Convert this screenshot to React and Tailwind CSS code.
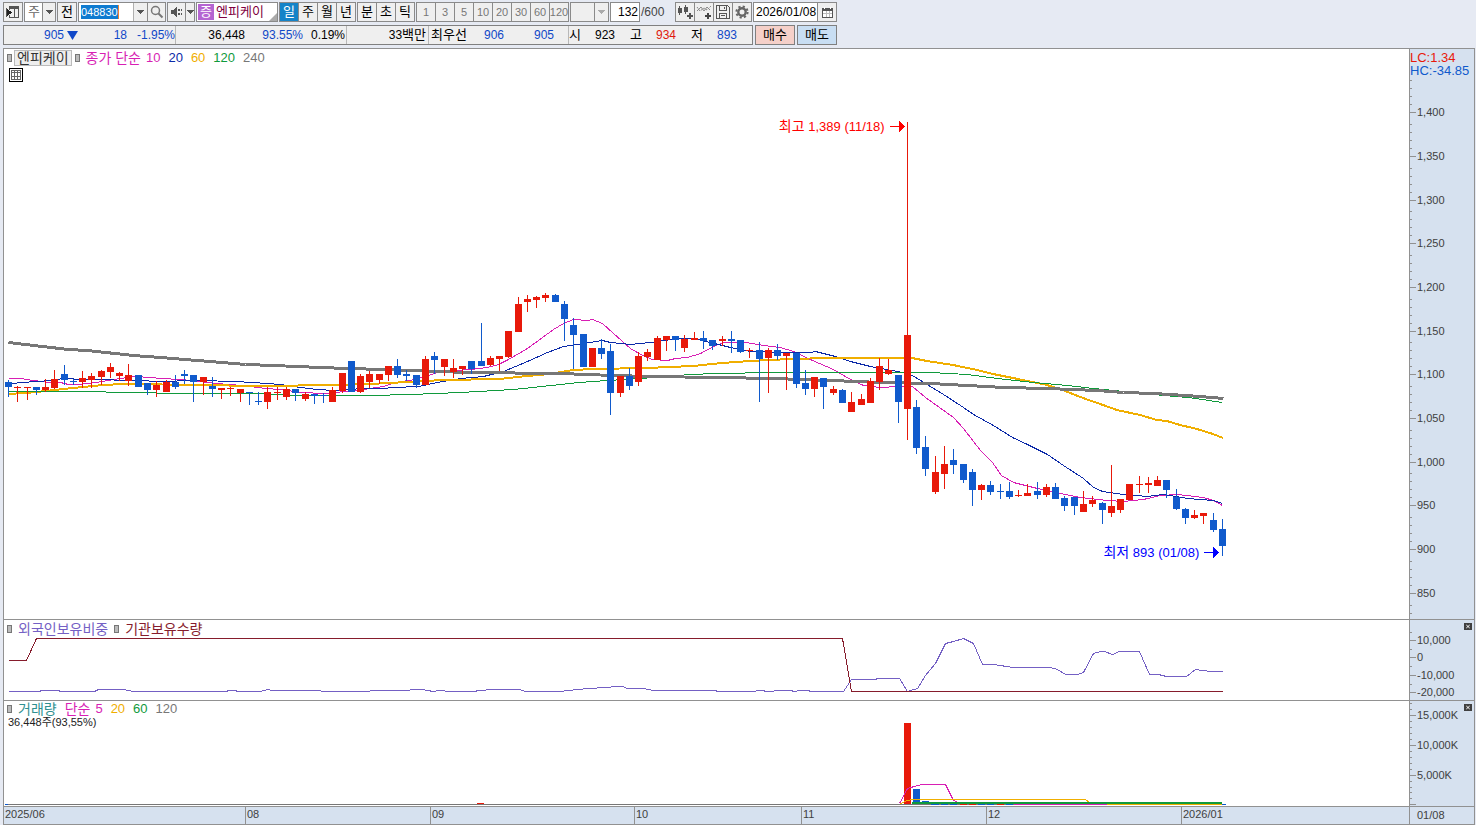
import React from "react";

const RED = "#e8190a";
const BLUE = "#105acc";

// One entry per trading day: colour, high, body top, body bottom, low.
const CANDLES = `B380,382,387,397 R386,387,388,402 R387,387,388,400 B387,387,390,395 R379,387,390,392 R370,379,388,389
B365,374,380,385 B379,381,382,385 R371,378,382,388 R373,376,380,388 R370,371,377,385 R363,367,372,378
R372,373,376,381 R364,375,381,386 B375,375,387,387 B383,383,390,395 R381,385,390,397 R380,382,392,392
B375,382,387,389 B370,374,376,384 B375,375,382,402 R377,377,382,395 B377,386,389,397 R388,388,390,399
R387,388,389,396 R389,389,393,402 B392,392,393,405 B392,401,402,405 R387,392,402,409 R387,392,393,400
R387,389,397,400 B389,389,393,401 R392,394,399,401 B394,394,396,404 B393,395,396,403 R387,390,402,402
R373,373,391,393 B361,361,392,392 R374,376,392,393 R371,374,382,388 R374,374,380,384 R366,366,375,381
B359,366,375,378 B370,374,376,381 B375,375,385,388 R356,359,385,385 B352,356,360,374 R359,359,367,376
R359,368,372,378 R366,366,369,375 B361,361,369,374 B323,361,366,366 R356,358,365,366 R356,356,359,371
R331,331,357,358 R297,304,332,332 R295,299,302,312 R296,297,300,308 R293,295,298,302 B294,295,302,302
B301,304,319,341 B318,325,335,369 B334,334,367,367 R348,348,367,367 B339,348,354,359 B344,351,393,415
R376,376,393,397 B368,376,386,390 R352,356,382,386 R349,352,357,361 R336,338,360,360 R336,336,340,351
B336,336,340,351 R335,339,348,352 R332,338,340,340 B331,338,341,349 B340,340,346,350 R336,339,341,346
B331,339,341,353 B340,340,352,353 R348,350,351,358 B342,350,359,402 R348,350,358,393 B344,350,356,360
R353,353,356,390 B353,353,384,388 B370,383,389,395 R377,377,389,397 B378,378,387,409 R386,389,393,395
B389,390,403,403 R392,402,412,412 R394,399,405,405 R378,381,403,403 R358,366,382,390 R359,370,374,375
B375,375,402,423 R122,335,409,440 B400,407,448,454 B436,447,469,476 R456,472,492,494 R446,464,474,489
B449,460,465,474 B464,464,480,483 B469,472,490,506 R484,485,490,500 B481,485,492,495 B484,491,492,499
B482,491,497,499 R490,495,496,497 R484,493,496,496 B482,491,495,499 R484,487,495,497 B483,487,499,499
B496,498,506,511 B497,497,506,515 R491,504,512,512 R496,500,504,507 B502,503,510,524 R465,506,513,517
R499,499,510,513 R484,484,500,500 R476,484,485,493 R477,483,485,493 R476,480,486,486 B480,480,490,498
B489,497,509,510 B508,509,518,524 R510,515,518,519 R513,513,516,524 B513,520,530,532 B519,529,546,556`
  .split(/\s+/)
  .map((s) => [s[0], ...s.slice(1).split(",").map(Number)]);

const candleX = (i) => 8 + Math.round(i * 9.267);

const MA10 =
  "8,378 20,378 33,380 50,382 60,382 68,384 78,384 95,382 108,380 120,378 135,376 150,377 160,378 180,379 200,381 215,383 230,384 250,386 265,388 280,389 300,392 325,393 345,391 363,389 383,386 395,382 415,379 437,372 455,370 470,369 487,367 498,364 508,359 527,348 553,329 563,323 573,319 587,320 592,319 602,323 613,333 630,348 642,355 652,359 667,360 675,358 687,357 700,353 713,346 723,342 745,342 763,345 780,347 793,351 812,360 833,369 850,379 863,385 880,387 897,386 912,386 925,397 953,417 963,428 980,450 992,462 1001,475 1013,482 1037,488 1060,493 1080,497 1107,500 1123,501 1143,499 1160,495 1177,494 1203,497 1213,500 1222,505";
const MA20 =
  "8,384 20,382 37,381 50,380 63,378 83,379 143,380 153,381 200,380 233,381 253,382 280,384 300,387 317,389 333,390 363,388 383,388 393,387 418,386 437,382 460,378 483,376 503,371 527,361 547,352 563,346 583,343 602,340 610,342 630,344 650,342 663,340 683,338 697,339 710,342 730,347 750,351 790,352 810,352 815,351 835,356 850,361 870,366 897,371 907,373 912,375 925,383 943,394 963,407 973,414 993,425 1012,437 1027,444 1047,454 1063,465 1083,478 1093,487 1102,491 1123,494 1147,496 1163,494 1187,498 1213,500 1222,503";
const MA60 =
  "8,394 25,393 37,392 63,389 83,387 103,385 123,384 200,385 257,386 340,385 370,384 407,382 443,380 500,379 527,376 550,374 573,370 593,369 647,368 670,367 693,366 722,363 750,361 790,359 830,358 880,358 912,358 927,361 953,365 977,370 993,374 1013,378 1047,385 1060,389 1083,398 1103,405 1117,410 1140,415 1157,420 1167,421 1180,425 1197,429 1213,434 1223,438";
const MA120 =
  "8,391 60,391 150,392 160,393 260,393 270,394 300,395 370,395 410,394 460,392 513,389 532,387 560,384 578,382 607,380 640,378 667,376 689,374 717,373 773,372 930,372 967,374 997,378 1033,382 1067,385 1093,388 1163,395 1188,397 1222,402";
const MA240 =
  "8,342 42,346 68,349 87,350 133,355 160,357 197,360 245,364 273,365 320,367 347,368 383,369 410,370 467,372 560,373 613,375 650,376 717,377 773,378 830,380 857,381 880,382 930,383 967,385 1003,387 1047,388 1097,390 1123,392 1153,393 1170,394 1200,396 1223,398";
const FOREIGN =
  "8,691 39,691 41,690 58,690 60,691 94,691 98,689 123,689 128,690 133,691 226,691 228,690 235,690 237,691 260,691 267,689 272,690 300,690 340,691 400,690 420,689 428,690 432,691 440,690 449,691 475,691 477,690 495,689 519,689 525,691 560,691 568,690 587,688 607,687 615,686 622,686 627,688 643,688 653,690 715,690 717,691 754,691 757,690 763,690 765,691 782,690 791,690 793,691 801,690 808,690 810,691 843,691 851,679 875,679 877,678 899,678 907,691 910,690 917,688 925,675 935,663 945,643 953,641 963,638 973,643 982,664 993,664 1013,667 1050,667 1057,669 1065,674 1077,674 1083,672 1093,653 1100,651 1104,651 1112,654 1119,651 1139,651 1149,674 1158,674 1166,676 1186,676 1195,669 1210,671 1222,671";
const INSTITUTION = "8,660 26,660 36,638 842,638 851,691 1222,691";

const PRICE_TICKS = [
  ["1,400", 112], ["1,350", 156], ["1,300", 200], ["1,250", 243], ["1,200", 287], ["1,150", 331],
  ["1,100", 374], ["1,050", 418], ["1,000", 462], ["950", 505], ["900", 549], ["850", 593],
];
const PRICE_MINOR = [...PRICE_TICKS.flatMap(([, y]) => [y - 8, y - 16, y - 24, y - 32]), 605, 613];
const HOLD_TICKS = [["10,000", 640], ["0", 657], ["-10,000", 675], ["-20,000", 692]];
const HOLD_MINOR = [632, 649, 666, 684];
const VOL_TICKS = [["15,000K", 715], ["10,000K", 745], ["5,000K", 775], ["", 804]];
const VOL_MINOR = [703, 709, 721, 727, 733, 739, 751, 757, 763, 769, 781, 787, 792, 798];

const VOL_BARS = [
  [904, 723, 7, 81, RED], [913, 789, 7, 15, BLUE], [922, 801, 7, 3, BLUE], [477, 803, 7, 1, RED],
  [931, 804, 8, 1, BLUE], [941, 804, 7, 1, BLUE], [950, 804, 7, 1, BLUE], [960, 804, 7, 1, RED],
  [969, 804, 7, 1, RED], [978, 804, 7, 1, BLUE], [987, 804, 7, 1, BLUE], [997, 804, 7, 1, RED],
  [1006, 804, 7, 1, BLUE], [1014, 804, 93, 1, "#d81fb4"], [1107, 804, 115, 1, "#f0ae00"],
  [1222, 804, 4, 1, BLUE], [5, 804, 3, 1, BLUE],
];

function Line({ points, color, width = 1 }) {
  return (
    <polyline
      points={points}
      fill="none"
      stroke={color}
      strokeWidth={width}
      transform={width === 2 ? undefined : "translate(.5 .5)"}
      shapeRendering="crispEdges"
    />
  );
}

function Axis({ top, height, ticks, minor, className, children }) {
  return (
    <div className="relative w-[65px] shrink-0 border-l border-[#919191] bg-[#d6e1ef]">
      <svg viewBox={`1410 ${top} 64 ${height}`} className={"block w-full " + className}>
        {minor.map((y) => (
          <rect key={y} x="1410" y={y} width="2" height="1" fill="#919191" />
        ))}
        {ticks.map(([label, y]) => (
          <g key={y}>
            <rect x="1410" y={y} width="6" height="1" fill="#919191" />
            <text x="1417" y={y + 4} fontSize="11" fill="#404040">{label}</text>
          </g>
        ))}
      </svg>
      {children}
    </div>
  );
}

function ClosePane({ label }) {
  return (
    <button aria-label={label} className="absolute right-[2px] top-[3px] h-[7px] w-2 bg-[#404040]">
      <svg viewBox="0 0 8 7" className="block h-full w-full" stroke="#fff" strokeWidth="1">
        <path d="M2.3 2l3.4 3M5.7 2l-3.4 3" />
      </svg>
    </button>
  );
}

const Marker = () => <span className="h-2 w-[5px] shrink-0 border border-[#777] bg-[#bbb]" />;
const Down = ({ light }) => (
  <svg viewBox="0 0 7 4" className="h-1 w-[7px]" shapeRendering="crispEdges">
    <path d="M0 0h7L3.5 4z" fill={light ? "#aaa" : "#555"} />
  </svg>
);

const group = "flex h-5 border border-[#8a8a8a] bg-[#efefef]";
const tool = "flex w-[19px] items-center justify-center border-r border-[#8a8a8a] last:w-[18px] last:border-r-0";

function Toolbar() {
  return (
    <div className="flex gap-px">
      <button aria-label="패널 열기" className={group + " w-5 items-center justify-center"}>
        <svg viewBox="0 0 16 16" className="h-4 w-4" shapeRendering="crispEdges">
          <path d="M4 2h10v12H4v-3h1v2h4V5H5v1H4zM10 5v8h3V5z" fill="#555" fillRule="evenodd" />
          <path d="M2 5l5 3.500L2 12z" fill="#222" />
          <path d="M1 4h1v9H1z" fill="#555" />
        </svg>
      </button>
      <div className={group + " relative w-8 bg-white"}>
        <select aria-label="종목 구분" className="w-full appearance-none bg-transparent pl-[3px] text-[13px] leading-[18px] text-[#666]">
          <option>주</option>
        </select>
        <span className="pointer-events-none absolute inset-y-0 right-0 flex w-[13px] items-center justify-center border-l border-[#8a8a8a] bg-[#efefef]"><Down /></span>
      </div>
      <button className={group + " w-5 items-center justify-center"}>전</button>
      <div className={group + " w-[88px]"}>
        <div className="flex flex-1 items-center bg-white pl-0.5">
          <input aria-label="종목코드" defaultValue="048830" className="h-[14px] w-[37px] bg-[#0f7bd0] text-[11px] text-white outline-none" />
          <span className="h-[14px] w-px bg-[#f08030]" />
        </div>
        <button aria-label="종목 목록" className="flex w-[14px] items-center justify-center border-l border-[#b0b0b0]"><Down /></button>
        <button aria-label="종목 검색" className="flex w-[18px] items-center justify-center border-l border-[#8a8a8a]">
          <svg viewBox="0 0 14 14" className="h-[14px] w-[14px]" fill="none" stroke="#777">
            <circle cx="5.500" cy="5.500" r="4" strokeWidth="1.500" />
            <path d="M8.500 8.500L12.500 12.500" strokeWidth="2" />
          </svg>
        </button>
      </div>
      <div className={group + " w-7"}>
        <button aria-label="음성" className="flex w-[17px] items-center justify-center">
          <svg viewBox="0 0 14 12" className="h-3 w-[14px]" fill="#555" shapeRendering="crispEdges">
            <path d="M1 4h2l4-4v12L3 8H1zM8 3h2v2H8zM8 7h2v2H8zM11 3h1v2h-1zM11 7h1v2h-1z" />
          </svg>
        </button>
        <button aria-label="음성 설정" className="flex flex-1 items-center justify-center border-l border-[#8a8a8a]"><Down /></button>
      </div>
      <div className={group + " relative w-[82px] items-center gap-[2px] bg-white pl-px"}>
        <span className="flex h-4 w-4 items-center justify-center bg-[#b565d2] text-white">증</span>
        <span className="text-[#800040]">엔피케이</span>
        <svg viewBox="0 0 8 8" className="absolute bottom-0 right-0 h-2 w-2"><path d="M8 0v8H0z" fill="#aaa" /></svg>
      </div>
      <div className={group}>
        {["일", "주", "월", "년"].map((t) => (
          <button key={t} className={tool + (t === "일" ? " bg-[#1483c8] text-white" : "")}>{t}</button>
        ))}
      </div>
      <div className={group}>
        {["분", "초", "틱"].map((t) => <button key={t} className={tool}>{t}</button>)}
      </div>
      <div className={group + " text-[11px] text-[#777]"}>
        {["1", "3", "5", "10", "20", "30", "60", "120"].map((t) => <button key={t} className={tool}>{t}</button>)}
      </div>
      <div className={group + " relative w-[39px]"}>
        <select aria-label="분 간격" disabled className="w-full appearance-none bg-transparent"><option></option></select>
        <span className="pointer-events-none absolute inset-y-0 right-0 flex w-[14px] items-center justify-center border-l border-[#8a8a8a]"><Down light /></span>
      </div>
      <div className="flex items-center text-[12px]">
        <input aria-label="표시 개수" defaultValue="132" className="h-5 w-[30px] border border-[#8a8a8a] bg-white pr-px text-right outline-none" />
        <span className="w-[34px] pl-px text-[#444]">/600</span>
      </div>
      <div className={group}>
        <button aria-label="차트 추가" className={tool}>
          <svg viewBox="0 0 16 16" className="h-4 w-4" fill="#555" shapeRendering="crispEdges">
            <path d="M1 4h4v5H1zM2 2h1v9H2zM7 3h4v5H7zM8 1h1v9H8zM12 9h2v2h2v2h-2v2h-2v-2h-2v-2h2z" />
          </svg>
        </button>
        <button aria-label="지표 추가" className={tool}>
          <svg viewBox="0 0 16 16" className="h-4 w-4" fill="none" stroke="#888">
            <path d="M1 7l4-4 3 4 3-4 3 3" />
            <path d="M1 3l3 4 4-3 3 2 4-4" strokeDasharray="2 1" />
            <path d="M12 9v6M9 12h6" stroke="#444" strokeWidth="2" />
          </svg>
        </button>
        <button aria-label="저장" className={tool}>
          <svg viewBox="0 0 16 16" className="h-4 w-4" fill="none" stroke="#555" shapeRendering="crispEdges">
            <path d="M1.500 1.500h11l2 2v11h-13zM4.500 2v4h7V2M4.500 14V9.500h7V14M9.500 3v2" />
            <path d="M6 11.500h4" />
          </svg>
        </button>
        <button aria-label="설정" className={tool}>
          <svg viewBox="0 0 16 16" className="h-4 w-4" fill="none" stroke="#666">
            <circle cx="8" cy="8" r="3.700" strokeWidth="2.400" />
            <circle cx="8" cy="8" r="5.600" strokeWidth="2" strokeDasharray="2.200 2.200" />
          </svg>
        </button>
      </div>
      <div className={group + " w-[84px] bg-white"}>
        <input aria-label="조회 일자" defaultValue="2026/01/08" className="w-[63px] pl-0.5 text-[12px] outline-none" />
        <button aria-label="달력" className="flex flex-1 items-center justify-center border-l border-[#8a8a8a] bg-[#efefef]">
          <svg viewBox="0 0 11 11" className="h-[11px] w-[11px]" shapeRendering="crispEdges">
            <path d="M0 1h11v10H0z" fill="#555" /><path d="M1 4h9v6H1z" fill="#fff" />
            <path d="M4 4h1v6H4zM7 4h1v6H7zM1 6h9v1H1z" fill="#bbb" /><path d="M2 0h1v2H2zM8 0h1v2H8z" fill="#fff" />
          </svg>
        </button>
      </div>
    </div>
  );
}

const cell = "flex items-center border-r border-[#b8b8b8]";

function QuoteBar() {
  return (
    <div className="flex gap-0.5">
      <div className="flex h-5 w-[750px] border border-[#808080] bg-[#efefef] text-[12px]">
        <div className={cell + " w-[172px] text-[#1048c8]"}>
          <span className="w-[60px] text-right">905</span>
          <svg viewBox="0 0 11 9" className="ml-[3px] h-[9px] w-[11px]"><path d="M0 0h11L5.500 9z" fill="#1048c8" /></svg>
          <span className="w-[49px] text-right">18</span>
          <span className="w-12 text-right">-1.95%</span>
        </div>
        <div className={cell + " w-[171px]"}>
          <span className="w-[69px] text-right">36,448</span>
          <span className="w-[58px] text-right text-[#1048c8]">93.55%</span>
          <span className="w-[42px] text-right">0.19%</span>
        </div>
        <div className={cell + " w-[82px] justify-end pr-0.5"}>33<span className="text-[13px]">백만</span></div>
        <div className={cell + " w-[140px] pl-0.5"}>
          <span className="w-9 text-[13px]">최우선</span>
          <span className="w-[37px] text-right text-[#1048c8]">906</span>
          <span className="w-[50px] text-right text-[#1048c8]">905</span>
        </div>
        <div className="flex items-center gap-[15px]">
          <span className="flex"><span className="w-[15px] text-[13px]">시</span><span className="w-[31px] text-right">923</span></span>
          <span className="flex"><span className="w-[15px] text-[13px]">고</span><span className="w-[31px] text-right text-[#e0180c]">934</span></span>
          <span className="flex"><span className="w-[15px] text-[13px]">저</span><span className="w-[31px] text-right text-[#1048c8]">893</span></span>
        </div>
      </div>
      <button className="h-5 w-10 border border-[#808080] bg-[#f5d0c9]">매수</button>
      <button className="h-5 w-10 border border-[#808080] bg-[#c8def3]">매도</button>
    </div>
  );
}

function Arrow({ color }) {
  return (
    <svg viewBox="0 0 15 11" className="ml-[5px] h-[11px] w-[15px]" shapeRendering="crispEdges">
      <path d="M0 5h9V0h1l5 5.500-5 5.500H9V6H0z" fill={color} />
    </svg>
  );
}

export default function App() {
  return (
    <main className="flex min-h-screen flex-col bg-[#e6eaf3] pl-[3px] pr-px font-['Liberation_Sans','Noto_Sans_CJK_KR',sans-serif] text-[13px] leading-4 text-black">
      <header className="flex flex-col gap-[3px] pb-[3px] pt-0.5">
        <Toolbar />
        <QuoteBar />
      </header>

      <div className="border border-[#919191] bg-white">
        <section aria-label="가격 차트" className="flex border-b border-[#919191]">
          <div className="relative min-w-0 flex-1">
            <svg viewBox="4 49 1405 570" preserveAspectRatio="none" className="block h-[570px] w-full">
              <Line points={MA10} color="#d81fb4" />
              <Line points={MA20} color="#0c2aa8" />
              <Line points={MA60} color="#f0ae00" width={2} />
              <Line points={MA120} color="#109a3c" />
              <Line points={MA240} color="#777" width={3} />
              <g shapeRendering="crispEdges">
                {CANDLES.map(([c, high, top, bottom, low], i) => (
                  <g key={i} fill={c === "R" ? RED : BLUE}>
                    <rect x={candleX(i)} y={high} width="1" height={low - high} />
                    <rect x={candleX(i) - 3} y={top} width="7" height={bottom - top} />
                  </g>
                ))}
              </g>
            </svg>
            <div className="absolute left-[3px] top-px flex h-4 items-center">
              <Marker />
              <span className="ml-0.5 flex h-4 items-center border border-[#bbb] bg-[#eee] px-[2px] text-[14px] text-[#333]">엔피케이</span>
              <span className="ml-[3px] flex"><Marker /></span>
              <span className="ml-1.5 text-[14px] text-[#d81fb4]">종가 단순</span>
              <span className="ml-[5px] flex gap-2">
                <span className="text-[#d81fb4]">10</span>
                <span className="text-[#0c2aa8]">20</span>
                <span className="text-[#f0ae00]">60</span>
                <span className="text-[#109a3c]">120</span>
                <span className="text-[#777]">240</span>
              </span>
            </div>
            <button aria-label="데이터 표" className="absolute left-[5px] top-[19px] h-[14px] w-[14px] border border-black bg-white">
              <svg viewBox="0 0 12 12" className="block h-3 w-3" fill="none" stroke="#666" shapeRendering="crispEdges">
                <path d="M1.500 1.500h9v9h-9zM4.500 1v10M7.500 1v10M1 3.500h10M1 7.500h10" />
              </svg>
            </button>
            <div className="absolute right-[35.900%] top-[69px] flex items-center whitespace-nowrap text-[#f00]">
              <span><span className="text-[14px]">최고</span> 1,389 (11/18)</span>
              <Arrow color="#f00" />
            </div>
            <div className="absolute right-[13.500%] top-[495px] flex items-center whitespace-nowrap text-[#00f]">
              <span><span className="text-[14px]">최저</span> 893 (01/08)</span>
              <Arrow color="#00f" />
            </div>
          </div>
          <Axis top={49} height={570} ticks={PRICE_TICKS} minor={PRICE_MINOR} className="h-[570px]">
            <div className="absolute left-0 top-[2px] text-[13px] leading-[13px]">
              <div className="text-[#e8190a]">LC:1.34</div>
              <div className="text-[#105acc]">HC:-34.85</div>
            </div>
          </Axis>
        </section>

        <section aria-label="보유 현황" className="flex border-b border-[#919191]">
          <div className="relative min-w-0 flex-1">
            <svg viewBox="4 620 1405 80" preserveAspectRatio="none" className="block h-20 w-full">
              <Line points={FOREIGN} color="#7460c4" />
              <Line points={INSTITUTION} color="#861c2c" />
            </svg>
            <div className="absolute left-[3px] top-px flex h-4 items-center text-[14px]">
              <Marker />
              <span className="ml-1.5 mr-1.5 text-[#7460c4]">외국인보유비중</span>
              <Marker />
              <span className="ml-1.5 text-[#861c2c]">기관보유수량</span>
            </div>
          </div>
          <Axis top={620} height={80} ticks={HOLD_TICKS} minor={HOLD_MINOR} className="h-20">
            <ClosePane label="보유 현황 닫기" />
          </Axis>
        </section>

        <section aria-label="거래량" className="flex border-b border-[#919191]">
          <div className="relative min-w-0 flex-1">
            <svg viewBox="4 701 1405 105" preserveAspectRatio="none" className="block h-[105px] w-full">
              <g shapeRendering="crispEdges">
                <rect x="5" y="804" width="1217" height="1" fill="#777" />
                {VOL_BARS.map(([x, y, w, h, fill]) => (
                  <rect key={x} x={x} y={y} width={w} height={h} fill={fill} />
                ))}
                <rect x="912" y="803" width="310" height="1" fill="#777" />
              </g>
              <Line points="899,803 907,788 917,785 922,784 945,784 953,800 958,802" color="#d81fb4" />
              <Line points="900,803 907,800 913,799 1085,799 1089,802" color="#f0ae00" />
              <rect x="912" y="802" width="310" height="2" fill="#109a3c" />
            </svg>
            <div className="absolute left-[3px] top-0 flex h-4 items-center">
              <Marker />
              <span className="ml-1.5 text-[14px] text-[#309090]">거래량</span>
              <span className="ml-2 text-[14px] text-[#d81fb4]">단순</span>
              <span className="ml-[5px] flex gap-2">
                <span className="text-[#d81fb4]">5</span>
                <span className="text-[#f0ae00]">20</span>
                <span className="text-[#109a3c]">60</span>
                <span className="text-[#777]">120</span>
              </span>
            </div>
            <div className="absolute left-1 top-4 text-[11px] leading-none text-[#222]">36,448주(93,55%)</div>
          </div>
          <Axis top={701} height={105} ticks={VOL_TICKS} minor={VOL_MINOR} className="h-[105px]">
            <ClosePane label="거래량 닫기" />
          </Axis>
        </section>

        <footer className="flex h-[17px] bg-[#d6e1ef] text-[11px] leading-[15px] text-[#404040]">
          <div className="grid min-w-0 flex-1 grid-cols-[241fr_185fr_204fr_167fr_185fr_195fr_228fr]">
            {["2025/06", "08", "09", "10", "11", "12", "2026/01"].map((m) => (
              <span key={m} className="border-l border-[#919191] pl-px first:border-l-0">{m}</span>
            ))}
          </div>
          <span className="w-[65px] border-l border-[#919191] pl-[7px] leading-[17px]">01/08</span>
        </footer>
      </div>
    </main>
  );
}
